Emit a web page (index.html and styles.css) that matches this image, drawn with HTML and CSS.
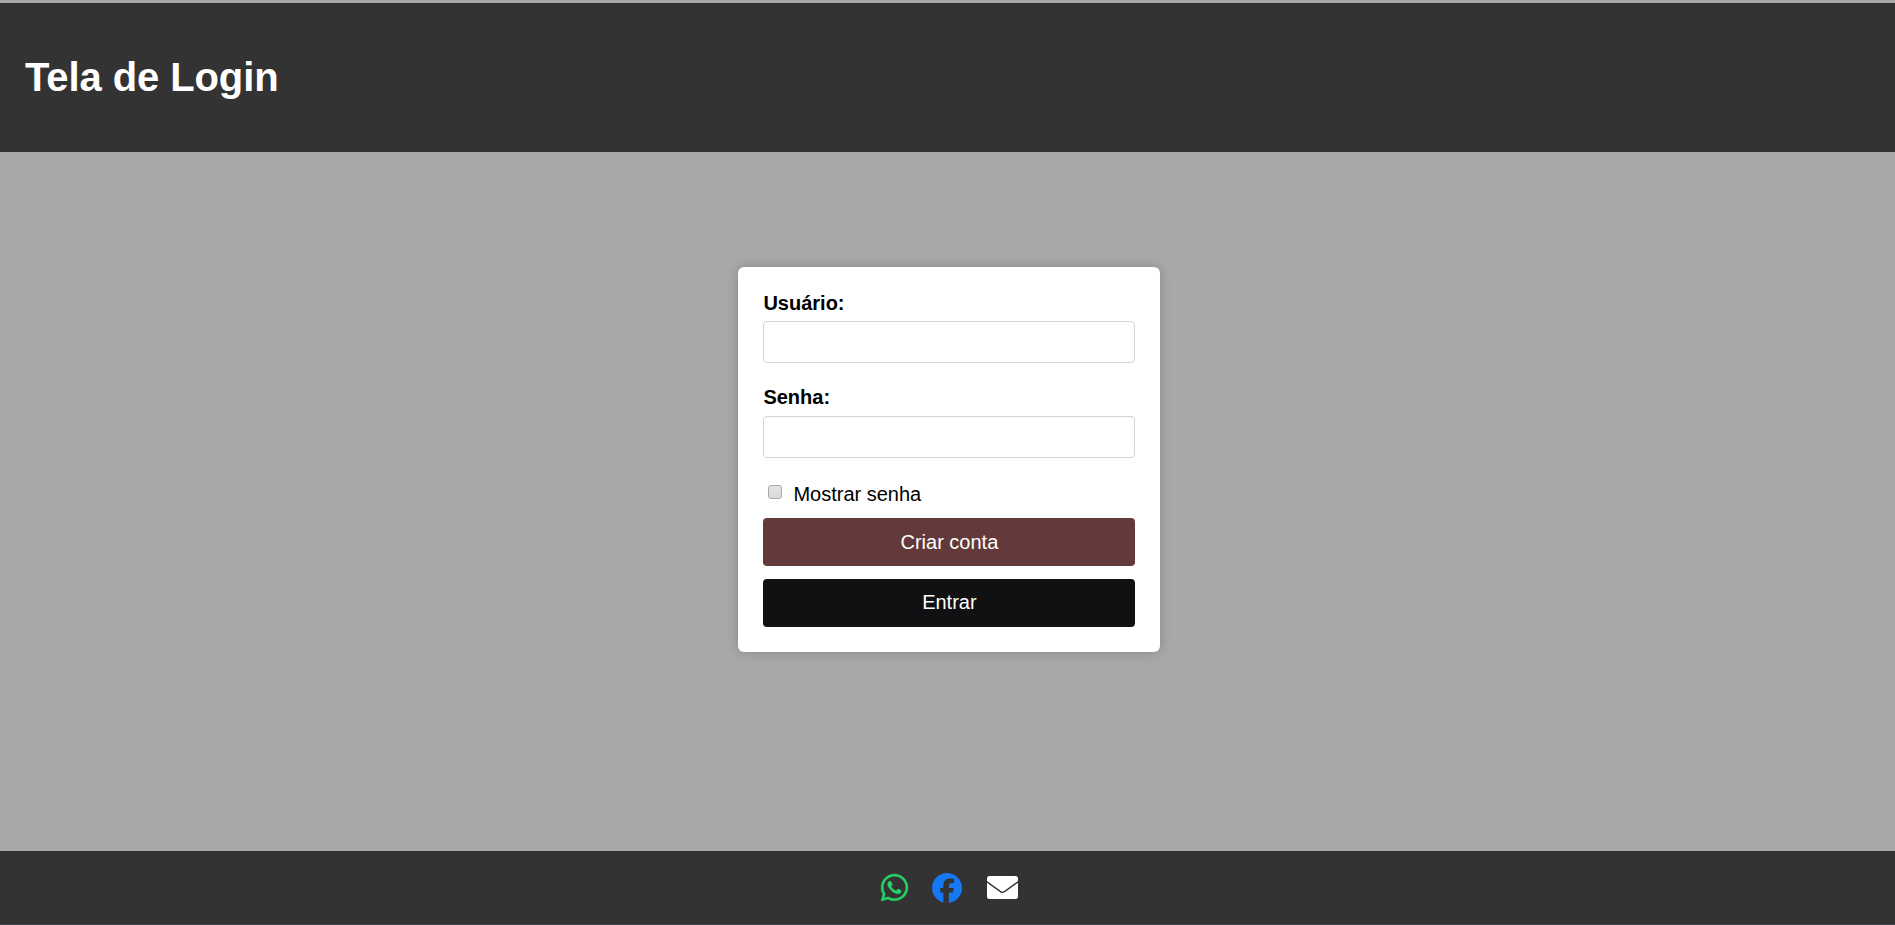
FILE: index.html
```html
<!DOCTYPE html>
<html lang="pt-BR">
<head>
<meta charset="utf-8">
<title>Tela de Login</title>
<link rel="stylesheet" href="styles.css">
</head>
<body>
<header class="header"><h1 class="title">Tela de Login</h1></header>
<main class="main">
  <form class="card">
    <label class="label" for="user">Usuário:</label>
    <input class="field" id="user" type="text">
    <label class="label label-password" for="pass">Senha:</label>
    <input class="field" id="pass" type="password">
    <label class="show"><input class="check" type="checkbox"><span>Mostrar senha</span></label>
    <button class="button create" type="button">Criar conta</button>
    <button class="button enter" type="button">Entrar</button>
  </form>
</main>
<footer class="footer">
  <svg class="whatsapp" viewBox="0 32 448 448" aria-label="WhatsApp"><path fill="#25d366" stroke="#25d366" stroke-width="6" d="M380.900 97.100C339 55.100 283.200 32 223.900 32c-122.400 0-222 99.600-222 222 0 39.100 10.200 77.300 29.600 111L0 480l117.700-30.900c32.400 17.700 68.900 27 106.100 27h.1c122.300 0 224.100-99.600 224.100-222 0-59.300-25.200-115-67.100-157zm-157 341.600c-33.200 0-65.700-8.900-94-25.700l-6.700-4-69.800 18.300L72 359.200l-4.400-7c-18.500-29.400-28.200-63.300-28.200-98.200 0-101.700 82.800-184.500 184.600-184.500 49.300 0 95.600 19.200 130.400 54.100 34.800 34.900 56.200 81.200 56.100 130.500 0 101.800-84.900 184.600-186.600 184.600zm101.200-138.200c-5.500-2.800-32.800-16.200-37.900-18-5.100-1.900-8.800-2.800-12.500 2.800-3.700 5.600-14.300 18-17.600 21.800-3.200 3.700-6.500 4.200-12 1.400-32.600-16.300-54-29.100-75.500-66-5.700-9.800 5.700-9.100 16.300-30.300 1.800-3.700.9-6.900-.5-9.700-1.400-2.800-12.500-30.100-17.100-41.200-4.500-10.800-9.100-9.300-12.500-9.500-3.200-.2-6.900-.2-10.600-.2-3.700 0-9.700 1.400-14.800 6.900-5.100 5.600-19.400 19-19.400 46.300 0 27.300 19.900 53.700 22.600 57.400 2.800 3.700 39.100 59.700 94.800 83.800 35.200 15.200 49 16.500 66.600 13.900 10.700-1.600 32.800-13.400 37.400-26.400 4.600-13 4.600-24.100 3.200-26.400-1.300-2.500-5-3.900-10.500-6.600z"/></svg>
  <svg class="facebook" viewBox="0 0 512 512" aria-label="Facebook"><path fill="#1877f2" d="M512 256C512 114.600 397.400 0 256 0S0 114.600 0 256C0 376 82.700 476.800 194.200 504.500V334.200H141.400V256h52.800V222.300c0-87.100 39.400-127.500 125-127.500 16.200 0 44.200 3.200 55.700 6.400V172c-6-.6-16.500-1-29.600-1-42 0-58.200 15.900-58.200 57.200V256h83.600l-14.400 78.200H287V510.100C413.800 494.800 512 386.900 512 256z"/></svg>
  <svg class="mail" viewBox="0 0 31 23" aria-label="E-mail"><rect width="31" height="23" rx="2.500" fill="#fff"/><path fill="none" stroke="#333" stroke-width="1.300" d="M-.5 5.500 13.500 15.600Q15.500 17 17.500 15.600L31.500 5.500"/></svg>
</footer>
</body>
</html>
```
FILE: styles.css
```css
* { box-sizing: border-box; }
body {
  margin: 0;
  height: 925px;
  padding-top: 3px;
  display: flex;
  flex-direction: column;
  overflow: hidden;
  background: #a8a8a8;
  font: 20px "Liberation Sans", Arial, sans-serif;
}
.header { height: 149px; padding: 51px 25px 0; background: #333; }
.title { margin: 0; color: #fff; font-size: 40px; line-height: 46px; letter-spacing: -.1px; }
.main { flex: 1; padding: 115.3px 0 0 738.4px; }
.card {
  width: 422px;
  height: 385px;
  padding: 25px;
  display: flex;
  flex-direction: column;
  background: #fff;
  border-radius: 6px;
  box-shadow: 0 0 12px rgba(0, 0, 0, .2);
}
.label { height: 23px; line-height: 23px; margin-bottom: 6px; font-weight: bold; }
.label-password { margin-top: 23px; margin-bottom: 7px; }
.field {
  width: 372px;
  height: 42px;
  margin: 0;
  border: 1px solid #d3d3d3;
  border-radius: 4px;
  background: #fff;
}
.show { height: 23px; margin: 23px 0 14px; display: flex; line-height: 27px; }
.check {
  appearance: none;
  width: 14px;
  height: 14px;
  margin: 4px 11px 0 5px;
  border: 1px solid #ababab;
  border-radius: 3px;
  background: linear-gradient(#e5e5e5, #d9d9d9);
}
.button {
  width: 372px;
  height: 48px;
  flex-shrink: 0;
  padding: 0;
  border: 0;
  border-radius: 4px;
  color: #fff;
  font: inherit;
}
.create { background: #633939; }
.enter { margin-top: 13px; padding-bottom: 2px; background: #111113; }
.footer {
  height: 74px;
  display: flex;
  justify-content: center;
  padding: 22px 0 0 4px;
  background: #333;
  border-bottom: 1px solid #3e474b;
}
.whatsapp { width: 27px; height: 27px; margin: 1px 24.500px 0 -.5px; overflow: visible; }
.facebook { width: 30px; height: 30px; margin-right: 25px; }
.mail { width: 31px; height: 23px; margin-top: 3px; }
```
